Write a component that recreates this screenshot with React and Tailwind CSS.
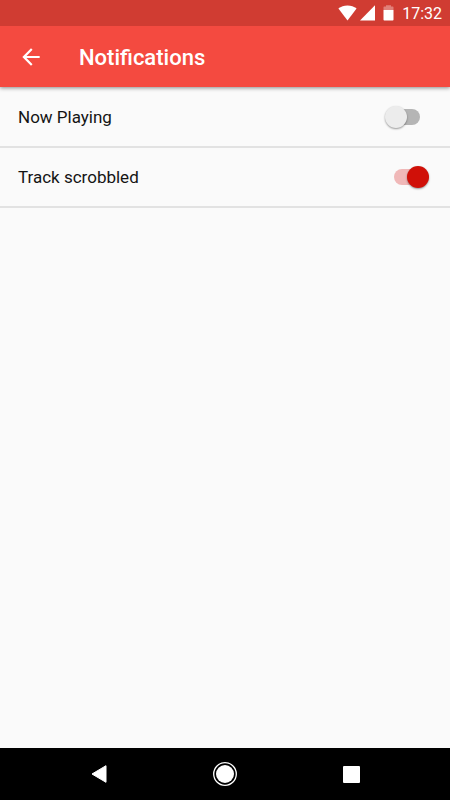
import { useState } from "react";

function StatusBar() {
  return (
    <div className="relative z-10 flex h-[26px] items-center justify-end bg-[#d03c32] pr-2 text-white">
      <svg width="19" height="16" viewBox="0 0 19 16" className="mr-[3px]" aria-hidden="true">
        <path d="M9.5 15.6 0.4 3.6C3 1.5 6 0.4 9.5 0.4s6.500 1.100 9.100 3.200z" fill="currentColor" />
      </svg>
      <svg width="15" height="16" viewBox="0 0 15 16" className="mr-2" aria-hidden="true">
        <path d="M15 0.300V15.500H0z" fill="currentColor" />
      </svg>
      <svg width="11" height="16" viewBox="0 0 11 16" className="mr-2" aria-hidden="true">
        <path d="M3 0.300h5v1.200h1.700q.8 0 .8.800V5H0.500V2.300q0-.8.800-.8H3z" fill="currentColor" fillOpacity="0.35" />
        <path d="M0.500 5h10v9.800q0 .8-.8.8H1.300q-.8 0-.8-.8z" fill="currentColor" />
      </svg>
      <time className="pt-0.5 text-base leading-5">17:32</time>
    </div>
  );
}

function AppBar() {
  return (
    <header className="relative flex h-[61px] items-center bg-[#f44a40] pl-[18px] text-white shadow-[0_1px_4px_rgba(0,0,0,0.45)]">
      <button type="button" aria-label="Back" className="flex size-[26px] items-center justify-center">
        <svg width="26" height="26" viewBox="0 0 24 24" fill="currentColor" aria-hidden="true">
          <path d="M20 11H7.830l5.590-5.590L12 4l-8 8 8 8 1.410-1.410L7.830 13H20v-2z" />
        </svg>
      </button>
      <h1 className="ml-[35px] pt-0.5 text-[22px] leading-7 font-medium">Notifications</h1>
    </header>
  );
}

function SettingRow({ label, initial }) {
  const [on, setOn] = useState(initial);
  return (
    <li className="border-b-2 border-[#e2e2e2]">
      <label className="flex h-[58px] items-center justify-between pr-[21px] pl-[18px]">
        <span className="text-[17px] leading-6 text-[#141414]">{label}</span>
        <span className="relative flex h-[22px] w-11 items-center">
          <input
            type="checkbox"
            role="switch"
            checked={on}
            onChange={(e) => setOn(e.target.checked)}
            className="peer absolute inset-0 m-0 appearance-none"
          />
          <span className="pointer-events-none mx-auto h-4 w-[26px] rounded-full bg-[#b5b5b5] peer-checked:bg-[#f0b8b8]" />
          <span className="pointer-events-none absolute top-0 left-0 size-[22px] rounded-full bg-[#ececec] shadow-[0_1px_2px_rgba(0,0,0,0.4)] peer-checked:left-[22px] peer-checked:bg-[#d01008]" />
        </span>
      </label>
    </li>
  );
}

function NavBar() {
  return (
    <nav className="flex h-[52px] items-center justify-center bg-black text-white">
      <button type="button" aria-label="Back" className="flex w-[28%] justify-center">
        <svg width="16" height="18" viewBox="0 0 16 18" aria-hidden="true">
          <path d="M15 .700v16.600L1 9z" fill="currentColor" stroke="currentColor" strokeLinejoin="round" />
        </svg>
      </button>
      <button type="button" aria-label="Home" className="flex w-[28%] justify-center">
        <svg width="24" height="24" viewBox="0 0 24 24" aria-hidden="true">
          <circle cx="12" cy="12" r="11.300" fill="none" stroke="currentColor" strokeWidth="1.300" />
          <circle cx="12" cy="12" r="9" fill="currentColor" />
        </svg>
      </button>
      <button type="button" aria-label="Recent apps" className="flex w-[28%] justify-center">
        <svg width="17" height="17" viewBox="0 0 17 17" aria-hidden="true">
          <rect width="17" height="17" rx="1" fill="currentColor" />
        </svg>
      </button>
    </nav>
  );
}

export default function App() {
  return (
    <div className="flex min-h-screen flex-col bg-[#fafafa] font-[Roboto,sans-serif]">
      <StatusBar />
      <AppBar />
      <main className="flex-1 pt-px">
        <ul>
          <SettingRow label="Now Playing" initial={false} />
          <SettingRow label="Track scrobbled" initial={true} />
        </ul>
      </main>
      <NavBar />
    </div>
  );
}
